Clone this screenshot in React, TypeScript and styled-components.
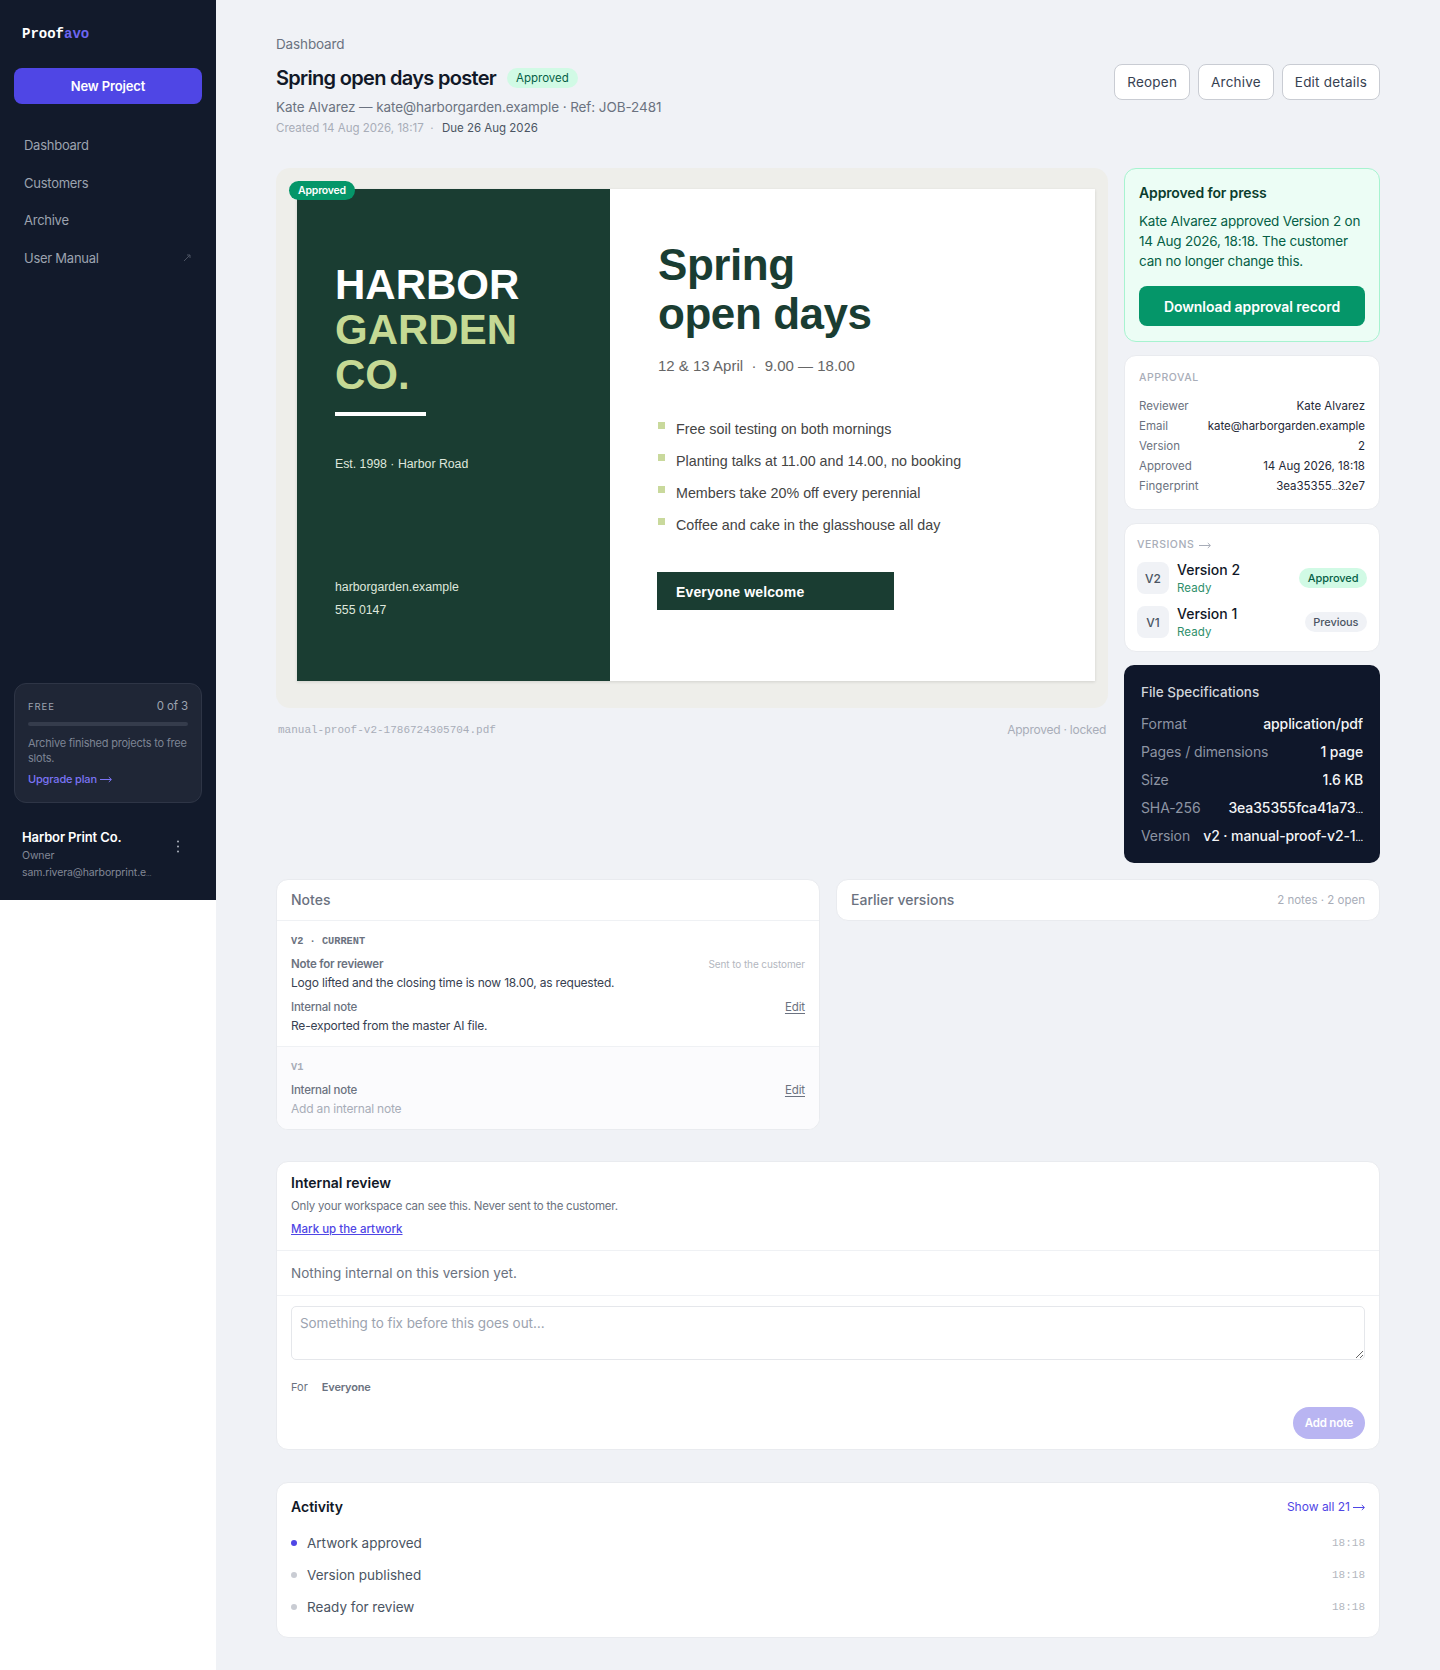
import styled, { createGlobalStyle } from 'styled-components';

const GlobalStyle = createGlobalStyle`
  * {
    box-sizing: border-box;
  }

  body {
    margin: 0;
    background: #fff;
    font-family: Inter, "Liberation Sans", sans-serif;
    letter-spacing: 0;
    color: #111827;
  }
`;

const mono = '"Liberation Mono", monospace';
const poster = '"Liberation Sans", Arial, sans-serif';

const Shell = styled.div`
  display: flex;
  align-items: stretch;
  min-height: 1670px;
`;

const Sidebar = styled.aside`
  width: 216px;
  height: 900px;
  flex-shrink: 0;
  background: #121a2b;
  padding: 26px 14px 13px;
  display: flex;
  flex-direction: column;
`;

const Logo = styled.div`
  font-family: ${mono};
  font-size: 14px;
  font-weight: 700;
  line-height: 16px;
  color: #fff;
  margin-left: 8px;

  span {
    color: #6d66f0;
  }
`;

const NewProject = styled.button`
  margin-top: 26px;
  height: 36px;
  flex-shrink: 0;
  border: 0;
  border-radius: 8px;
  background: #4f46e5;
  color: #fff;
  font-family: inherit;
  font-size: 13px;
  font-weight: 600;
  letter-spacing: -0.01em;
`;

const Nav = styled.nav`
  margin-top: 31px;
  display: flex;
  flex-direction: column;
  gap: 17.5px;
  padding: 0 10px;
`;

const NavItem = styled.div`
  display: flex;
  justify-content: space-between;
  align-items: center;
  height: 20px;
  font-size: 13px;
  letter-spacing: -0.02em;
  color: #9ca3af;

  svg {
    margin-right: 1px;
  }
`;

const PlanCard = styled.div`
  margin-top: auto;
  height: 120px;
  flex-shrink: 0;
  border-radius: 12px;
  background: #1f2636;
  border: 1px solid #2e3546;
  padding: 15px 13px 0;
`;

const PlanTop = styled.div`
  display: flex;
  justify-content: space-between;
  align-items: center;
  line-height: 15px;

  span:first-child {
    font-size: 9.5px;
    letter-spacing: 0.1em;
    color: #9ca3af;
  }

  span:last-child {
    font-size: 11.5px;
    color: #9ca3af;
    letter-spacing: -0.01em;
  }
`;

const PlanBar = styled.div`
  margin-top: 8px;
  height: 4px;
  background: #353c4c;
  border-radius: 2px;
`;

const PlanText = styled.div`
  margin-top: 10px;
  font-size: 11px;
  line-height: 15px;
  letter-spacing: -0.02em;
  color: #7d8494;
`;

const PlanLink = styled.div`
  margin-top: 6px;
  display: flex;
  align-items: center;
  gap: 3px;
  font-size: 11px;
  font-weight: 500;
  line-height: 15px;
  letter-spacing: -0.015em;
  color: #7b74f5;
`;

const Account = styled.div`
  margin-top: 26px;
  padding: 0 8px;
  height: 58px;
  flex-shrink: 0;
  display: flex;
  justify-content: space-between;
  align-items: flex-start;
`;

const AccountName = styled.div`
  font-size: 13px;
  font-weight: 600;
  line-height: 16px;
  margin-bottom: 2px;
  letter-spacing: -0.01em;
  color: #fff;
`;

const AccountSub = styled.div`
  font-size: 10.5px;
  line-height: 17px;
  letter-spacing: -0.012em;
  color: #828896;
`;

const Dots = styled.svg`
  margin: 11px 14px 0 0;
`;

const Main = styled.main`
  flex: 1;
  background: #f0f2f6;
  padding: 36px 60px 29px;
`;

const Header = styled.header`
  display: flex;
  justify-content: space-between;
  align-items: flex-start;
  height: 132px;
`;

const Crumb = styled.div`
  font-size: 13.5px;
  line-height: 16px;
  letter-spacing: -0.01em;
  color: #6b7280;
`;

const TitleRow = styled.div`
  margin-top: 12px;
  display: flex;
  align-items: center;
  gap: 11px;
  height: 28px;
`;

const Title = styled.h1`
  margin: 0;
  font-size: 20px;
  font-weight: 600;
  letter-spacing: -0.035em;
  color: #111827;
`;

const Pill = styled.span<{ $tone: 'green' | 'grey' }>`
  display: inline-flex;
  align-items: center;
  height: 20px;
  padding: 0 8.5px;
  border-radius: 10px;
  font-size: 11px;
  font-weight: 500;
  letter-spacing: -0.005em;
  white-space: nowrap;
  background: ${(p) => (p.$tone === 'green' ? '#d1fae5' : '#f0f2f6')};
  color: ${(p) => (p.$tone === 'green' ? '#065f46' : '#4b5563')};
`;

const TitlePill = styled(Pill)`
  padding: 0 9px;
  font-size: 11.5px;
  font-weight: 400;
  letter-spacing: 0;
`;

const Contact = styled.div`
  margin-top: 6px;
  font-size: 13.5px;
  line-height: 18px;
  letter-spacing: -0.006em;
  color: #6b7280;
`;

const Dates = styled.div`
  margin-top: 4px;
  font-size: 11.5px;
  line-height: 16px;
  color: #a8adb8;

  span {
    color: #4b5563;
    margin-left: 2px;
  }
`;

const Actions = styled.div`
  margin-top: 28px;
  display: flex;
  gap: 8px;
`;

const OutlineButton = styled.button`
  height: 36px;
  padding: 0 12px;
  border: 1px solid #c9ccd3;
  border-radius: 8px;
  background: #fff;
  color: #374151;
  font-family: inherit;
  font-size: 13.5px;
  letter-spacing: 0.015em;
`;

const TopGrid = styled.section`
  display: grid;
  grid-template-columns: 832px 256px;
  gap: 16px;
`;

const PreviewFrame = styled.div`
  position: relative;
  height: 540px;
  background: #eeeeea;
  border-radius: 14px;
  padding: 21px 13px 27px 21px;
`;

const CornerBadge = styled.span`
  position: absolute;
  left: 13px;
  top: 13px;
  height: 19px;
  width: 66px;
  border-radius: 10px;
  background: #059669;
  color: #fff;
  font-size: 10.5px;
  font-weight: 600;
  letter-spacing: -0.02em;
  display: flex;
  align-items: center;
  justify-content: center;
`;

const Sheet = styled.div`
  height: 100%;
  display: grid;
  grid-template-columns: 313px 1fr;
  background: #fff;
  box-shadow: 0 1px 3px rgba(0, 0, 0, 0.12);
  font-family: ${poster};
`;

const SheetLeft = styled.div`
  background: #1a3d32;
  padding: 73px 38px 0;
  color: #fff;
`;

const Brand = styled.div`
  font-size: 42px;
  font-weight: 700;
  line-height: 45px;

  span {
    color: #c5d994;
    display: block;
  }
`;

const BrandRule = styled.div`
  margin-top: 14.5px;
  width: 91px;
  height: 4px;
  background: #fff;
`;

const Est = styled.div`
  margin-top: 40px;
  font-size: 12.3px;
  line-height: 16px;
  color: #dfe7dc;
`;

const SheetContact = styled.div`
  margin-top: 104px;
  font-size: 12.3px;
  line-height: 23px;
  color: #dfe7dc;
`;

const SheetRight = styled.div`
  padding: 51px 47px 0 48px;
`;

const Headline = styled.h2`
  margin: 0;
  font-size: 44px;
  font-weight: 700;
  line-height: 49px;
  letter-spacing: -0.01em;
  color: #1a3d32;
`;

const When = styled.div`
  margin-top: 18px;
  font-size: 15px;
  line-height: 20px;
  color: #666;
`;

const Perks = styled.ul`
  list-style: none;
  margin: 43px 0 0;
  padding: 0;
  display: flex;
  flex-direction: column;
  gap: 12px;
`;

const Perk = styled.li`
  position: relative;
  padding-left: 18px;
  font-size: 14.3px;
  line-height: 20px;
  color: #444;

  &::before {
    content: '';
    position: absolute;
    left: 0;
    top: 3px;
    width: 7px;
    height: 7px;
    background: #c9d99c;
  }
`;

const Cta = styled.div`
  margin: 37px 0 0 -1px;
  width: 237px;
  height: 38px;
  padding-left: 19px;
  background: #1a3d32;
  color: #fff;
  font-size: 14px;
  font-weight: 700;
  letter-spacing: 0.01em;
  line-height: 40px;
`;

const PreviewFoot = styled.div`
  margin-top: 14px;
  padding: 0 2px;
  display: flex;
  justify-content: space-between;
  align-items: center;
  line-height: 16px;
  font-size: 12px;
  letter-spacing: -0.02em;
  color: #a8adb8;
`;

const FileName = styled.span`
  font-family: ${mono};
  font-size: 11px;
  letter-spacing: 0;
`;

const Rail = styled.div`
  display: flex;
  flex-direction: column;
  gap: 13px;
`;

const PressCard = styled.div`
  height: 174px;
  background: #ecfdf5;
  border: 1px solid #a7f3d0;
  border-radius: 12px;
  padding: 15px 13px 0 14px;
`;

const PressTitle = styled.div`
  font-size: 14px;
  font-weight: 600;
  line-height: 18px;
  letter-spacing: -0.01em;
  color: #0b3d2e;
`;

const PressBody = styled.div`
  margin-top: 9px;
  font-size: 13.5px;
  line-height: 20px;
  letter-spacing: -0.015em;
  color: #065f46;
`;

const PressButton = styled.button`
  margin-top: 15px;
  width: 226px;
  height: 40px;
  border: 0;
  border-radius: 8px;
  background: #059669;
  color: #fff;
  font-family: inherit;
  font-size: 14px;
  font-weight: 600;
  letter-spacing: -0.005em;
`;

const WhiteCard = styled.div`
  background: #fff;
  border-radius: 12px;
  border: 1px solid #e9ebef;
`;

const RailLabel = styled.div`
  display: flex;
  align-items: center;
  gap: 5px;
  font-size: 10.5px;
  font-weight: 500;
  letter-spacing: 0.05em;
  line-height: 14px;
  color: #a8adb8;
`;

const ApprovalCard = styled(WhiteCard)`
  height: 155px;
  padding: 15px 14px 0;
`;

const KeyRows = styled.dl`
  margin: 11px 0 0;
  display: flex;
  flex-direction: column;
`;

const KeyRow = styled.div`
  display: flex;
  justify-content: space-between;
  font-size: 11.5px;
  line-height: 20px;

  dt {
    color: #6b7280;
  }

  dd {
    margin: 0;
    color: #1f2937;
  }
`;

const VersionsCard = styled(WhiteCard)`
  height: 129px;
  padding: 14px 12px 0;
`;

const VersionList = styled.div`
  margin-top: 8px;
  display: flex;
  flex-direction: column;
  gap: 8px;
`;

const VersionRow = styled.div`
  display: flex;
  align-items: center;
  gap: 8px;
`;

const VersionChip = styled.div`
  width: 32px;
  height: 32px;
  border-radius: 8px;
  background: #f0f2f6;
  color: #4b5563;
  font-size: 12px;
  font-weight: 500;
  display: flex;
  align-items: center;
  justify-content: center;
`;

const VersionText = styled.div`
  flex: 1;
  padding-top: 1px;
`;

const VersionName = styled.div`
  font-size: 14px;
  font-weight: 500;
  line-height: 18px;
  color: #111827;
`;

const VersionState = styled.div`
  margin-top: 1px;
  font-size: 11.5px;
  line-height: 16px;
  letter-spacing: 0.01em;
  color: #2f8f6b;
`;

const SpecCard = styled.div`
  height: 198px;
  background: #0f172a;
  border-radius: 10px;
  padding: 18px 17px 0 17px;
`;

const SpecTitle = styled.div`
  font-size: 13.5px;
  font-weight: 500;
  line-height: 18px;
  color: #d1d5db;
`;

const SpecRows = styled.div`
  margin-top: 9px;
`;

const SpecRow = styled.div`
  display: flex;
  justify-content: space-between;
  gap: 8px;
  font-size: 14px;
  line-height: 28px;
  letter-spacing: -0.008em;

  span:first-child {
    color: #8d94a3;
    white-space: nowrap;
  }

  span:last-child {
    color: #f3f4f6;
    font-weight: 500;
    white-space: nowrap;
    overflow: hidden;
    text-overflow: ellipsis;
  }
`;

const Ellipsis = styled.i`
  font-style: normal;
  font-size: 0.6em;
  line-height: 0;
`;

const NotesGrid = styled.section`
  margin-top: 16px;
  display: grid;
  grid-template-columns: 1fr 1fr;
  gap: 16px;
  align-items: start;
`;

const CardHead = styled.div`
  height: 40px;
  padding: 0 14px 1px;
  display: flex;
  justify-content: space-between;
  align-items: center;
`;

const CardHeading = styled.div`
  font-size: 14px;
  font-weight: 500;
  color: #6b7280;
`;

const HeadMeta = styled.div`
  font-size: 11.5px;
  color: #a8adb8;
`;

const NotesCard = styled(WhiteCard)`
  overflow: hidden;
`;

const NoteGroup = styled.div<{ $muted?: boolean }>`
  border-top: 1px solid #eff1f4;
  padding: 13px 14px 12px;
  background: ${(p) => (p.$muted ? '#fbfbfd' : '#fff')};
`;

const NoteTag = styled.div<{ $muted?: boolean }>`
  font-family: ${mono};
  font-size: 10.3px;
  font-weight: 700;
  line-height: 14px;
  color: ${(p) => (p.$muted ? '#a8adb8' : '#6b7280')};
`;

const NoteLabelRow = styled.div`
  margin-top: 8px;
  display: flex;
  justify-content: space-between;
  align-items: center;
  line-height: 16px;
`;

const NoteLabel = styled.span<{ $strong?: boolean }>`
  font-size: 11.5px;
  font-weight: ${(p) => (p.$strong ? 600 : 500)};
  letter-spacing: -0.02em;
  color: #6b7280;
`;

const NoteHint = styled.span`
  font-size: 10px;
  letter-spacing: -0.01em;
  color: #b3b7c0;
`;

const EditLink = styled.span`
  font-size: 11.5px;
  color: #6b7280;
  letter-spacing: -0.01em;
  text-decoration: underline;
  text-underline-offset: 2px;
`;

const NoteText = styled.div<{ $empty?: boolean }>`
  margin-top: 3px;
  font-size: 12px;
  line-height: 16px;
  letter-spacing: -0.016em;
  color: ${(p) => (p.$empty ? '#a8adb8' : '#374151')};
`;

const ReviewCard = styled(WhiteCard)`
  margin-top: 31px;
`;

const ReviewTop = styled.div`
  padding: 11px 14px 10px;
  height: 88px;
`;

const ReviewTitle = styled.div`
  font-size: 14px;
  font-weight: 600;
  line-height: 20px;
  color: #111827;
`;

const ReviewSub = styled.div`
  margin-top: 6px;
  font-size: 11.5px;
  line-height: 15px;
  letter-spacing: -0.02em;
  color: #6b7280;
`;

const ReviewLink = styled.a`
  display: inline-block;
  margin-top: 8px;
  font-size: 11.5px;
  font-weight: 500;
  line-height: 15px;
  color: #4f46e5;
  text-decoration: underline;
`;

const ReviewEmpty = styled.div`
  height: 46px;
  padding: 0 14px;
  border-top: 1px solid #eff1f4;
  border-bottom: 1px solid #eff1f4;
  display: flex;
  align-items: center;
  font-size: 13.5px;
  color: #6b7280;
`;

const ReviewForm = styled.div`
  padding: 10px 14px 10px;
`;

const NoteInput = styled.textarea`
  display: block;
  width: 100%;
  height: 54px;
  padding: 7px 8px;
  border: 1px solid #e5e7eb;
  border-radius: 5px;
  font-family: inherit;
  font-size: 13.5px;
  letter-spacing: -0.005em;
  line-height: 18px;

  &::placeholder {
    color: #9ca3af;
  }
`;

const AudienceRow = styled.div`
  margin-top: 19px;
  display: flex;
  gap: 14px;
  font-size: 11px;
  line-height: 16px;
  color: #6b7280;

  strong {
    font-weight: 600;
    letter-spacing: -0.015em;
  }
`;

const FormActions = styled.div`
  margin-top: 12px;
  display: flex;
  justify-content: flex-end;
`;

const AddNote = styled.button`
  width: 72px;
  height: 32px;
  border: 0;
  border-radius: 16px;
  background: #b9b5f2;
  color: #fff;
  font-family: inherit;
  font-size: 11.5px;
  font-weight: 600;
  letter-spacing: -0.02em;
`;

const ActivityCard = styled(WhiteCard)`
  margin-top: 32px;
  padding: 14px 14px 0;
  height: 156px;
`;

const ActivityHead = styled.div`
  display: flex;
  justify-content: space-between;
  align-items: center;
  line-height: 20px;
`;

const ActivityTitle = styled.div`
  font-size: 14px;
  font-weight: 600;
  color: #111827;
`;

const ShowAll = styled.div`
  display: flex;
  align-items: center;
  gap: 3px;
  font-size: 12px;
  color: #4f46e5;
`;

const ActivityList = styled.div`
  margin-top: 10px;
`;

const ActivityRow = styled.div`
  height: 32px;
  display: flex;
  align-items: center;
  font-size: 13.5px;
  color: #4b5563;

  time {
    margin-left: auto;
    font-family: ${mono};
    font-size: 11px;
    color: #b3b7c0;
  }
`;

const Dot = styled.span<{ $on?: boolean }>`
  width: 6px;
  height: 6px;
  margin-right: 10px;
  border-radius: 50%;
  background: ${(p) => (p.$on ? '#4f46e5' : '#c9ccd3')};
`;

const Arrow = () => (
  <svg width="12" height="7" viewBox="0 0 12 7" fill="none" stroke="currentColor" strokeWidth="1">
    <path d="M0 3.5h11.2M8.8 1l2.6 2.5L8.8 6" />
  </svg>
);

// Inter's ellipsis is much wider than the one in the picture
const Clipped = ({ text }: { text: string }) => {
  const [head, tail] = text.split('…');
  if (tail === undefined) return <>{text}</>;
  return (
    <>
      {head}
      <Ellipsis>…</Ellipsis>
      {tail}
    </>
  );
};

const navItems = ['Dashboard', 'Customers', 'Archive'];
const perks = [
  'Free soil testing on both mornings',
  'Planting talks at 11.00 and 14.00, no booking',
  'Members take 20% off every perennial',
  'Coffee and cake in the glasshouse all day',
];
const approvalRows = [
  ['Reviewer', 'Kate Alvarez'],
  ['Email', 'kate@harborgarden.example'],
  ['Version', '2'],
  ['Approved', '14 Aug 2026, 18:18'],
  ['Fingerprint', '3ea35355…32e7'],
];
const versions = [
  { chip: 'V2', name: 'Version 2', tone: 'green' as const, label: 'Approved' },
  { chip: 'V1', name: 'Version 1', tone: 'grey' as const, label: 'Previous' },
];
const specRows = [
  ['Format', 'application/pdf'],
  ['Pages / dimensions', '1 page'],
  ['Size', '1.6 KB'],
  ['SHA-256', '3ea35355fca41a73…'],
  ['Version', 'v2 · manual-proof-v2-1…'],
];
const activity = ['Artwork approved', 'Version published', 'Ready for review'];

const App = () => {
  return (
    <Shell>
      <GlobalStyle />
      <Sidebar>
        <Logo>
          Proof<span>avo</span>
        </Logo>
        <NewProject>New Project</NewProject>
        <Nav>
          {navItems.map((item) => (
            <NavItem key={item}>{item}</NavItem>
          ))}
          <NavItem>
            User Manual
            <svg width="8" height="8" viewBox="0 0 8 8" fill="none" stroke="#4b5262" strokeWidth="1">
              <path d="M1 7 7 1M4 1h3v3" />
            </svg>
          </NavItem>
        </Nav>
        <PlanCard>
          <PlanTop>
            <span>FREE</span>
            <span>0 of 3</span>
          </PlanTop>
          <PlanBar />
          <PlanText>Archive finished projects to free slots.</PlanText>
          <PlanLink>
            Upgrade plan <Arrow />
          </PlanLink>
        </PlanCard>
        <Account>
          <div>
            <AccountName>Harbor Print Co.</AccountName>
            <AccountSub>Owner</AccountSub>
            <AccountSub>
              <Clipped text="sam.rivera@harborprint.e…" />
            </AccountSub>
          </div>
          <Dots width="4" height="13" viewBox="0 0 4 13" fill="#aeb3bd">
            <circle cx="2" cy="1.5" r="1" />
            <circle cx="2" cy="6.5" r="1" />
            <circle cx="2" cy="11.5" r="1" />
          </Dots>
        </Account>
      </Sidebar>

      <Main>
        <Header>
          <div>
            <Crumb>Dashboard</Crumb>
            <TitleRow>
              <Title>Spring open days poster</Title>
              <TitlePill $tone="green">Approved</TitlePill>
            </TitleRow>
            <Contact>Kate Alvarez — kate@harborgarden.example · Ref: JOB-2481</Contact>
            <Dates>
              Created 14 Aug 2026, 18:17 &nbsp;·&nbsp; <span>Due 26 Aug 2026</span>
            </Dates>
          </div>
          <Actions>
            <OutlineButton>Reopen</OutlineButton>
            <OutlineButton>Archive</OutlineButton>
            <OutlineButton>Edit details</OutlineButton>
          </Actions>
        </Header>

        <TopGrid>
          <div>
            <PreviewFrame>
              <CornerBadge>Approved</CornerBadge>
              <Sheet>
                <SheetLeft>
                  <Brand>
                    HARBOR
                    <span>GARDEN</span>
                    <span>CO.</span>
                  </Brand>
                  <BrandRule />
                  <Est>Est. 1998 · Harbor Road</Est>
                  <SheetContact>
                    harborgarden.example
                    <br />
                    555 0147
                  </SheetContact>
                </SheetLeft>
                <SheetRight>
                  <Headline>
                    Spring
                    <br />
                    open days
                  </Headline>
                  <When>12 &amp; 13 April &nbsp;·&nbsp; 9.00 — 18.00</When>
                  <Perks>
                    {perks.map((perk) => (
                      <Perk key={perk}>{perk}</Perk>
                    ))}
                  </Perks>
                  <Cta>Everyone welcome</Cta>
                </SheetRight>
              </Sheet>
            </PreviewFrame>
            <PreviewFoot>
              <FileName>manual-proof-v2-1786724305704.pdf</FileName>
              <span>Approved · locked</span>
            </PreviewFoot>
          </div>

          <Rail>
            <PressCard>
              <PressTitle>Approved for press</PressTitle>
              <PressBody>
                Kate Alvarez approved Version 2 on 14 Aug 2026, 18:18. The customer can no longer change this.
              </PressBody>
              <PressButton>Download approval record</PressButton>
            </PressCard>
            <ApprovalCard>
              <RailLabel>APPROVAL</RailLabel>
              <KeyRows>
                {approvalRows.map(([key, value]) => (
                  <KeyRow key={key}>
                    <dt>{key}</dt>
                    <dd>
                      <Clipped text={value} />
                    </dd>
                  </KeyRow>
                ))}
              </KeyRows>
            </ApprovalCard>
            <VersionsCard>
              <RailLabel>
                VERSIONS <Arrow />
              </RailLabel>
              <VersionList>
                {versions.map((version) => (
                  <VersionRow key={version.chip}>
                    <VersionChip>{version.chip}</VersionChip>
                    <VersionText>
                      <VersionName>{version.name}</VersionName>
                      <VersionState>Ready</VersionState>
                    </VersionText>
                    <Pill $tone={version.tone}>{version.label}</Pill>
                  </VersionRow>
                ))}
              </VersionList>
            </VersionsCard>
            <SpecCard>
              <SpecTitle>File Specifications</SpecTitle>
              <SpecRows>
                {specRows.map(([key, value]) => (
                  <SpecRow key={key}>
                    <span>{key}</span>
                    <span>
                      <Clipped text={value} />
                    </span>
                  </SpecRow>
                ))}
              </SpecRows>
            </SpecCard>
          </Rail>
        </TopGrid>

        <NotesGrid>
          <NotesCard>
            <CardHead>
              <CardHeading>Notes</CardHeading>
            </CardHead>
            <NoteGroup>
              <NoteTag>V2 · CURRENT</NoteTag>
              <NoteLabelRow>
                <NoteLabel $strong>Note for reviewer</NoteLabel>
                <NoteHint>Sent to the customer</NoteHint>
              </NoteLabelRow>
              <NoteText>Logo lifted and the closing time is now 18.00, as requested.</NoteText>
              <NoteLabelRow>
                <NoteLabel>Internal note</NoteLabel>
                <EditLink>Edit</EditLink>
              </NoteLabelRow>
              <NoteText>Re-exported from the master AI file.</NoteText>
            </NoteGroup>
            <NoteGroup $muted>
              <NoteTag $muted>V1</NoteTag>
              <NoteLabelRow>
                <NoteLabel>Internal note</NoteLabel>
                <EditLink>Edit</EditLink>
              </NoteLabelRow>
              <NoteText $empty>Add an internal note</NoteText>
            </NoteGroup>
          </NotesCard>
          <WhiteCard>
            <CardHead>
              <CardHeading>Earlier versions</CardHeading>
              <HeadMeta>2 notes · 2 open</HeadMeta>
            </CardHead>
          </WhiteCard>
        </NotesGrid>

        <ReviewCard>
          <ReviewTop>
            <ReviewTitle>Internal review</ReviewTitle>
            <ReviewSub>Only your workspace can see this. Never sent to the customer.</ReviewSub>
            <ReviewLink>Mark up the artwork</ReviewLink>
          </ReviewTop>
          <ReviewEmpty>Nothing internal on this version yet.</ReviewEmpty>
          <ReviewForm>
            <NoteInput placeholder="Something to fix before this goes out…" />
            <AudienceRow>
              <span>For</span>
              <strong>Everyone</strong>
            </AudienceRow>
            <FormActions>
              <AddNote>Add note</AddNote>
            </FormActions>
          </ReviewForm>
        </ReviewCard>

        <ActivityCard>
          <ActivityHead>
            <ActivityTitle>Activity</ActivityTitle>
            <ShowAll>
              Show all 21 <Arrow />
            </ShowAll>
          </ActivityHead>
          <ActivityList>
            {activity.map((item, index) => (
              <ActivityRow key={item}>
                <Dot $on={index === 0} />
                {item}
                <time>18:18</time>
              </ActivityRow>
            ))}
          </ActivityList>
        </ActivityCard>
      </Main>
    </Shell>
  );
};

export default App;
